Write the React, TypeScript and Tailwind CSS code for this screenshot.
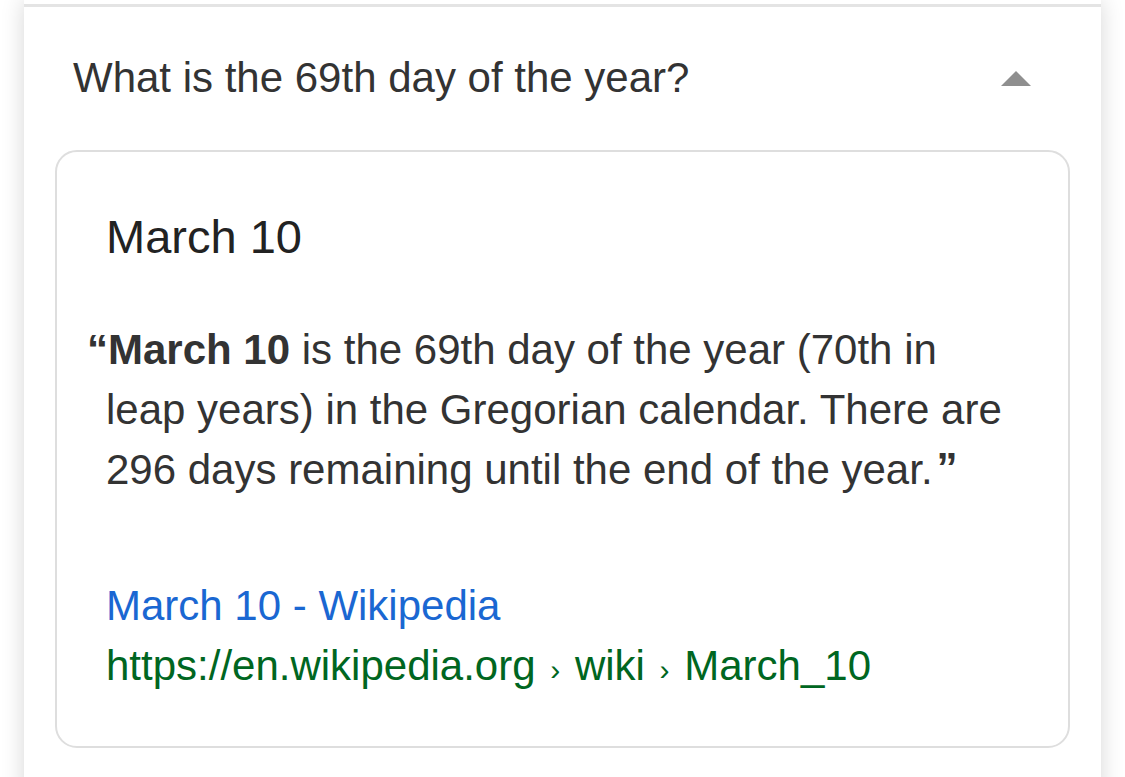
export default function App() {
  return (
    <div className="h-[777px] overflow-hidden bg-white px-[24px] font-['Liberation_Sans',Arial,sans-serif]">
      <div className="min-h-[800px] bg-white pt-[4px] shadow-[0_0_22px_rgba(0,0,0,0.16)]">
        <div className="h-[3px] bg-[#e4e4e4]" />

        <div className="flex items-center justify-between pl-[49px] pr-[70px] pt-[47px]">
          <h2 className="text-[42px] leading-[48px] text-[#333]">What is the 69th day of the year?</h2>
          <svg width="30" height="15" viewBox="0 0 30 15" aria-hidden="true">
            <polygon points="0,15 15,0 30,15" fill="#8f8f8f" />
          </svg>
        </div>

        <div className="mx-[31px] mt-[48px] rounded-[22px] border-2 border-[#dedede] pb-[50px] pl-[49px] pr-[40px] pt-[57px]">
          <p className="text-[47px] leading-[56px] text-[#222]">March 10</p>

          <p className="mt-[55px] text-[42px] leading-[60px] text-[#333]">
            <span className="-ml-[19px] font-bold">“</span>
            <b>March 10</b> is the 69th day of the year (70th in
            <br />
            leap years) in the Gregorian calendar. There are
            <br />
            296 days remaining until the end of the year.
            <span className="relative -top-[2px] ml-[4px] font-bold">”</span>
          </p>

          <div className="mt-[76px] text-[42px] leading-[60px]">
            <p className="text-[#1a67d2]">March 10 - Wikipedia</p>
            <p className="text-[#006621]">
              https://en.wikipedia.org <span className="mx-[3px] text-[30px] leading-none">›</span> wiki{" "}
              <span className="mx-[3px] text-[30px] leading-none">›</span> March_10
            </p>
          </div>
        </div>
      </div>
    </div>
  );
}
